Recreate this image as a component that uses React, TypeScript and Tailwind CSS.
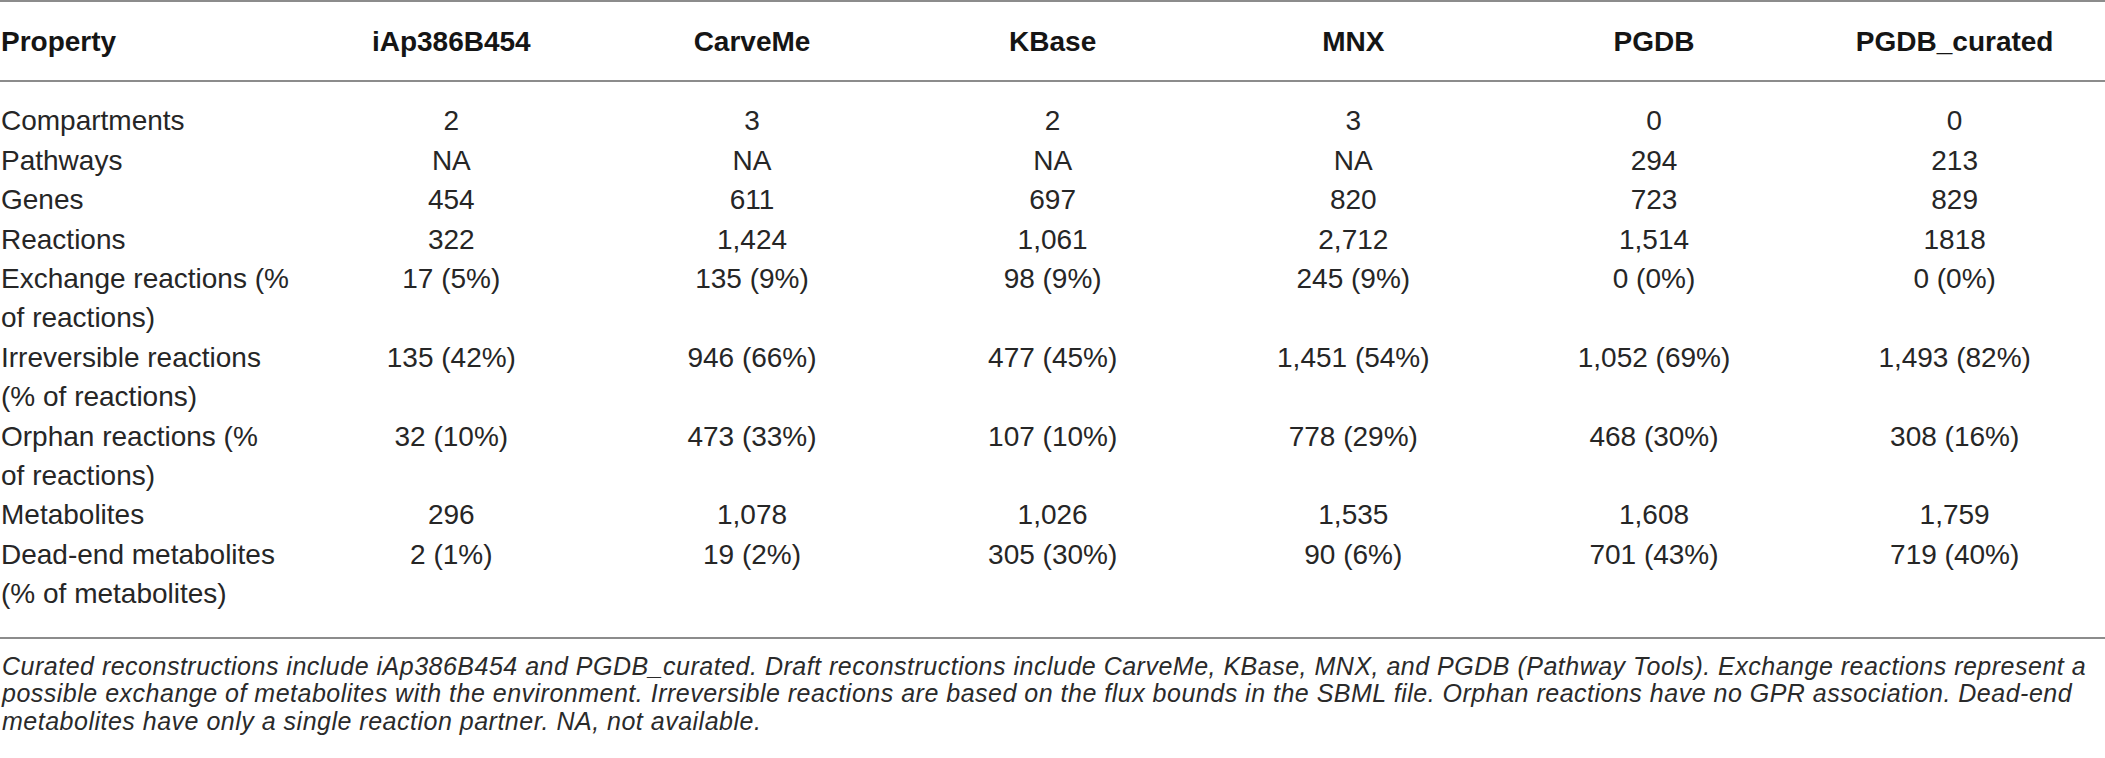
const columns = ["iAp386B454", "CarveMe", "KBase", "MNX", "PGDB", "PGDB_curated"];

type Row = { label: string[]; values: string[] };

const rows: Row[] = [
  { label: ["Compartments"], values: ["2", "3", "2", "3", "0", "0"] },
  { label: ["Pathways"], values: ["NA", "NA", "NA", "NA", "294", "213"] },
  { label: ["Genes"], values: ["454", "611", "697", "820", "723", "829"] },
  { label: ["Reactions"], values: ["322", "1,424", "1,061", "2,712", "1,514", "1818"] },
  {
    label: ["Exchange reactions (%", "of reactions)"],
    values: ["17 (5%)", "135 (9%)", "98 (9%)", "245 (9%)", "0 (0%)", "0 (0%)"],
  },
  {
    label: ["Irreversible reactions", "(% of reactions)"],
    values: ["135 (42%)", "946 (66%)", "477 (45%)", "1,451 (54%)", "1,052 (69%)", "1,493 (82%)"],
  },
  {
    label: ["Orphan reactions (%", "of reactions)"],
    values: ["32 (10%)", "473 (33%)", "107 (10%)", "778 (29%)", "468 (30%)", "308 (16%)"],
  },
  { label: ["Metabolites"], values: ["296", "1,078", "1,026", "1,535", "1,608", "1,759"] },
  {
    label: ["Dead-end metabolites", "(% of metabolites)"],
    values: ["2 (1%)", "19 (2%)", "305 (30%)", "90 (6%)", "701 (43%)", "719 (40%)"],
  },
];

const caption = [
  "Curated reconstructions include iAp386B454 and PGDB_curated. Draft reconstructions include CarveMe, KBase, MNX, and PGDB (Pathway Tools). Exchange reactions represent a",
  "possible exchange of metabolites with the environment. Irreversible reactions are based on the flux bounds in the SBML file. Orphan reactions have no GPR association. Dead-end",
  "metabolites have only a single reaction partner. NA, not available.",
];

export default function App() {
  return (
    <div className="w-[2105px] h-[758px] overflow-hidden bg-white font-['Liberation_Sans',Arial,sans-serif] text-[#262626]">
      {/* top rule */}
      <div className="h-[2px] bg-[#8c8c8c]" />

      {/* Header */}
      <div className="grid grid-cols-[301px_repeat(6,minmax(0,1fr))] pt-[20px] pb-[19px] text-[28px] leading-[39.4px] font-bold text-[#151515]">
        <div className="pl-[1px]">Property</div>
        {columns.map((c) => (
          <div key={c} className="text-center whitespace-nowrap">
            {c}
          </div>
        ))}
      </div>
      <div className="h-[2px] bg-[#8c8c8c]" />

      {/* Body */}
      <div className="pt-[19px] pb-[23px] text-[28px] leading-[39.4px]">
        {rows.map((r) => (
          <div key={r.label[0]} className="grid grid-cols-[301px_repeat(6,minmax(0,1fr))]">
            <div className="pl-[1px] whitespace-nowrap">
              {r.label.map((l) => (
                <div key={l}>{l}</div>
              ))}
            </div>
            {r.values.map((v, i) => (
              <div key={i} className="text-center whitespace-nowrap">
                {v}
              </div>
            ))}
          </div>
        ))}
      </div>
      <div className="h-[2px] bg-[#8c8c8c]" />

      {/* Footnote */}
      <div className="pt-[14px] pl-[2px] italic text-[25px] leading-[27.7px] tracking-[0.5px] text-[#2a2a2a]">
        {caption.map((line) => (
          <div key={line.slice(0, 12)} className="whitespace-nowrap">
            {line}
          </div>
        ))}
      </div>
    </div>
  );
}
